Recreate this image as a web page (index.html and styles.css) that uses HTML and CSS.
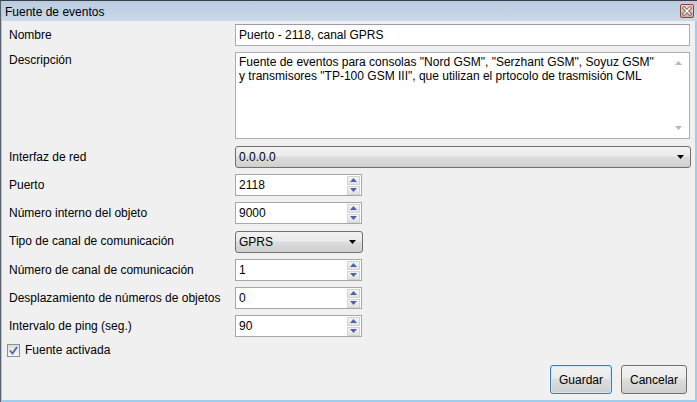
FILE: index.html
```html
<!DOCTYPE html>
<html>
<head>
<meta charset="utf-8">
<link rel="stylesheet" href="styles.css">
</head>
<body>
<div class="window">
  <div class="titlebar">
    <span class="title">Fuente de eventos</span>
    <span class="close">
      <svg width="14" height="14" viewBox="0 0 14 14">
        <defs>
          <linearGradient id="cg" x1="0" y1="0" x2="0" y2="1">
            <stop offset="0" stop-color="#e9d6d0"/>
            <stop offset="1" stop-color="#c9aaa2"/>
          </linearGradient>
        </defs>
        <rect x="0.5" y="0.5" width="13" height="13" rx="1.5" fill="url(#cg)" stroke="#8a4636"/>
        <path d="M4 4 L10 10 M10 4 L4 10" stroke="#5a3a34" stroke-width="3" stroke-linecap="square"/>
        <path d="M4 4 L10 10 M10 4 L4 10" stroke="#ffffff" stroke-width="1.6" stroke-linecap="square"/>
      </svg>
    </span>
  </div>
  <div class="body">
    <div class="form">
      <div class="label">Nombre</div>
      <div class="field"><div class="input wide">Puerto - 2118, canal GPRS</div></div>

      <div class="label top">Descripción</div>
      <div class="field">
        <div class="textarea">
          <div class="ta-text">Fuente de eventos para consolas "Nord GSM", "Serzhant GSM", Soyuz GSM"<br>y transmisores "TP-100 GSM III", que utilizan el prtocolo de trasmisión CML</div>
          <div class="ta-scroll">
            <svg width="7" height="4" viewBox="0 0 7 4"><path d="M0 4 L3.5 0 L7 4 Z" fill="#b8b8b8"/></svg>
            <svg width="7" height="4" viewBox="0 0 7 4"><path d="M0 0 L3.5 4 L7 0 Z" fill="#b8b8b8"/></svg>
          </div>
        </div>
      </div>

      <div class="label">Interfaz de red</div>
      <div class="field"><div class="combo wide"><span>0.0.0.0</span><svg width="7" height="4" viewBox="0 0 7 4"><path d="M0 0 L7 0 L3.5 4 Z" fill="#000"/></svg></div></div>

      <div class="label">Puerto</div>
      <div class="field"><div class="spin"><span>2118</span><div class="spin-btns"><div class="sb"><svg width="7" height="4" viewBox="0 0 7 4"><path d="M0 4 L3.5 0 L7 4 Z" fill="#4a64a8"/></svg></div><div class="sb"><svg width="7" height="4" viewBox="0 0 7 4"><path d="M0 0 L3.5 4 L7 0 Z" fill="#4a64a8"/></svg></div></div></div></div>

      <div class="label">Número interno del objeto</div>
      <div class="field"><div class="spin"><span>9000</span><div class="spin-btns"><div class="sb"><svg width="7" height="4" viewBox="0 0 7 4"><path d="M0 4 L3.5 0 L7 4 Z" fill="#4a64a8"/></svg></div><div class="sb"><svg width="7" height="4" viewBox="0 0 7 4"><path d="M0 0 L3.5 4 L7 0 Z" fill="#4a64a8"/></svg></div></div></div></div>

      <div class="label">Tipo de canal de comunicación</div>
      <div class="field"><div class="combo small"><span>GPRS</span><svg width="7" height="4" viewBox="0 0 7 4"><path d="M0 0 L7 0 L3.5 4 Z" fill="#000"/></svg></div></div>

      <div class="label">Número de canal de comunicación</div>
      <div class="field"><div class="spin"><span>1</span><div class="spin-btns"><div class="sb"><svg width="7" height="4" viewBox="0 0 7 4"><path d="M0 4 L3.5 0 L7 4 Z" fill="#4a64a8"/></svg></div><div class="sb"><svg width="7" height="4" viewBox="0 0 7 4"><path d="M0 0 L3.5 4 L7 0 Z" fill="#4a64a8"/></svg></div></div></div></div>

      <div class="label">Desplazamiento de números de objetos</div>
      <div class="field"><div class="spin"><span>0</span><div class="spin-btns"><div class="sb"><svg width="7" height="4" viewBox="0 0 7 4"><path d="M0 4 L3.5 0 L7 4 Z" fill="#4a64a8"/></svg></div><div class="sb"><svg width="7" height="4" viewBox="0 0 7 4"><path d="M0 0 L3.5 4 L7 0 Z" fill="#4a64a8"/></svg></div></div></div></div>

      <div class="label">Intervalo de ping (seg.)</div>
      <div class="field"><div class="spin"><span>90</span><div class="spin-btns"><div class="sb"><svg width="7" height="4" viewBox="0 0 7 4"><path d="M0 4 L3.5 0 L7 4 Z" fill="#4a64a8"/></svg></div><div class="sb"><svg width="7" height="4" viewBox="0 0 7 4"><path d="M0 0 L3.5 4 L7 0 Z" fill="#4a64a8"/></svg></div></div></div></div>
    </div>

    <div class="check-row">
      <span class="checkbox">
        <svg width="9" height="9" viewBox="0 0 9 9"><path d="M1 4.5 L3.5 7.5 L8 1" fill="none" stroke="#4d6a9c" stroke-width="1.8"/></svg>
      </span>
      <span>Fuente activada</span>
    </div>

    <div class="buttons">
      <button class="btn default">Guardar</button>
      <button class="btn cancel">Cancelar</button>
    </div>
  </div>
</div>
</body>
</html>
```

FILE: styles.css
```css
* { box-sizing: border-box; }
html, body { margin: 0; padding: 0; }
body {
  width: 697px;
  height: 402px;
  overflow: hidden;
  font-family: "Liberation Sans", Arial, sans-serif;
  font-size: 12px;
  color: #000;
  background: #f0f0f0;
}
.window {
  width: 697px;
  height: 402px;
  display: flex;
  flex-direction: column;
  border-left: 1px solid #59626c;
  border-top: 1px solid #3a3f45;
  background: #f0f0f0;
}
.titlebar {
  height: 20px;
  flex: none;
  display: flex;
  align-items: center;
  justify-content: space-between;
  padding: 0 2px 0 3px;
  background: linear-gradient(#b9cce1, #cbd9e8);
  border-left: 1px solid #a9c9e6;
}
.title { font-size: 12px; color: #000; padding-top: 1px; }
.close { display: flex; margin-right: 1px; }
.body {
  flex: 1;
  display: flex;
  flex-direction: column;
  border-left: 1px solid #9fcdee;
  border-right: 2px solid #9fcdee;
  border-bottom: 2px solid #9fcdee;
  padding: 3px 6px 6px 7px;
}
.form {
  display: grid;
  grid-template-columns: 226px 1fr;
  row-gap: 6px;
}
.label {
  display: flex;
  align-items: center;
  height: 22px;
}
.label.top { align-items: flex-start; padding-top: 1px; }
.field { display: flex; }
.input, .spin {
  height: 22px;
  background: #fff;
  border: 1px solid #abadb3;
  border-top-color: #9a9ea6;
  display: flex;
  align-items: center;
  padding-left: 3px;
}
.input.wide { width: 455px; }
.textarea {
  width: 455px;
  height: 87px;
  background: #fff;
  border: 1px solid #abadb3;
  display: flex;
  justify-content: space-between;
  margin-bottom: 1px;
}
.ta-text { padding: 2px 0 0 3px; line-height: 14px; }
.ta-scroll {
  width: 17px;
  display: flex;
  flex-direction: column;
  justify-content: space-between;
  align-items: center;
  padding: 8px 0 8px 0;
  margin-right: 2px;
}
.combo {
  height: 22px;
  border: 1px solid #707070;
  border-radius: 3px;
  background: linear-gradient(#f2f2f2 0%, #ebebeb 45%, #dddddd 50%, #cfcfcf 100%);
  display: flex;
  align-items: center;
  justify-content: space-between;
  padding: 0 6px 0 3px;
}
.combo.wide { width: 456px; }
.combo.small { width: 128px; margin-top: 1px; }
.spin {
  width: 127px;
  justify-content: space-between;
  padding-right: 1px;
  border-color: #a8a8a8;
}
.spin-btns {
  display: flex;
  flex-direction: column;
  gap: 1px;
}
.sb {
  width: 13px;
  height: 9px;
  border: 1px solid #d4d4d4;
  background: linear-gradient(#f4f4f4, #e2e2e2);
  display: flex;
  align-items: center;
  justify-content: center;
}
.check-row {
  display: flex;
  align-items: center;
  gap: 5px;
  margin-top: 6px;
  margin-left: -2px;
}
.checkbox {
  width: 13px;
  height: 13px;
  border: 1px solid #8e8f8f;
  background: linear-gradient(#dcdcdc, #f6f6f6);
  display: flex;
  align-items: center;
  justify-content: center;
}
.buttons {
  margin-top: auto;
  display: flex;
  justify-content: flex-end;
  gap: 9px;
  padding-right: 2px;
}
.btn {
  font-family: "Liberation Sans", Arial, sans-serif;
  font-size: 12px;
  color: #000;
  height: 29px;
  padding: 0;
  border: 1px solid #707070;
  border-radius: 3px;
  background: linear-gradient(#f2f2f2 0%, #ebebeb 45%, #dddddd 50%, #cfcfcf 100%);
}
.btn.default {
  border-color: #3c7fb1;
  box-shadow: inset 0 0 0 1px #c9e7f9;
  width: 62px;
}
.btn.cancel { width: 66px; }
```
